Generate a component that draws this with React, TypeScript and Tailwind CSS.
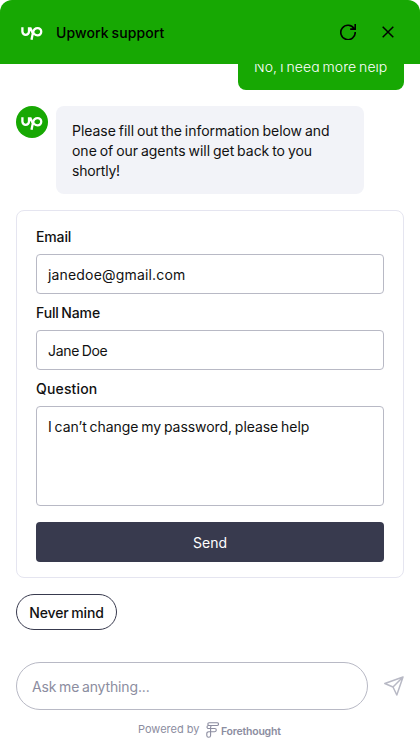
function UpLogo() {
  return (
    <svg className="h-4 w-6 shrink-0" viewBox="0 0 24 16" fill="none" stroke="white" strokeWidth="2.3">
      <path d="M2.4 3.2V7.6a3.3 3.3 0 0 0 6.6 0V4.3h1.5c.8 2.6 2.3 4.7 4.1 5.9" />
      <path d="M11.5 15.8l1.6-7.7c.6-2.6 2.1-4 4.5-4a3.65 3.65 0 1 1 0 7.3c-1.4 0-2.4-.5-3.4-1.4" />
    </svg>
  );
}

function Field({ label, value, tall = false, labelClass, valueClass }: { label: string; value: string; tall?: boolean; labelClass: string; valueClass: string }) {
  return (
    <div className="flex flex-col">
      <label className="h-9 pt-[9px] leading-5 font-medium"><span className={labelClass}>{label}</span></label>
      <div className={`${tall ? "h-[100px]" : "h-10"} rounded border border-[#b8b9c5] px-[11px] pt-[10px] leading-5`}>
        <span className={valueClass}>{value}</span>
      </div>
    </div>
  );
}

export default function App() {
  return (
    <main className="flex h-[750px] w-[420px] flex-col overflow-hidden bg-white font-['Inter',sans-serif] text-sm text-[#111]">
      <header className="flex h-16 shrink-0 items-center rounded-t-[12px] bg-[#17a803] pr-6 pl-5 text-black">
        <UpLogo />
        <h1 className="ml-3 pt-0.5 leading-5 font-medium tracking-[0.11px] [word-spacing:-1px]">Upwork support</h1>
        <div className="ml-auto flex items-center gap-6">
          <button aria-label="Restart">
            <svg className="block h-4 w-4" viewBox="0 0 16 16" fill="none" stroke="currentColor" strokeWidth="1.6">
              <path d="M14.2 4.8A7.2 7.2 0 1 0 15.2 8M15.2 0v5.1h-5" />
            </svg>
          </button>
          <button aria-label="Close">
            <svg className="block h-4 w-4" viewBox="0 0 16 16" fill="none" stroke="currentColor" strokeWidth="1.5">
              <path d="M2.7 2.7l10.6 10.6M13.3 2.7L2.7 13.3" />
            </svg>
          </button>
        </div>
      </header>

      <section className="flex h-[566px] shrink-0 flex-col px-4">
        <div className="flex h-[26px] w-[166px] shrink-0 items-end self-end overflow-hidden rounded-b-lg bg-[#17a803] px-4 pb-[13px] leading-5 text-white">
          <span className="font-light tracking-[0.03px] whitespace-nowrap [word-spacing:-1px]">No, I need more help</span>
        </div>
        <div className="mt-4 flex gap-2">
          <div className="flex h-8 w-8 shrink-0 items-center justify-center rounded-full bg-[#17a803]"><UpLogo /></div>
          <div className="h-[88px] w-[308px] rounded-lg bg-[#f2f3f8] p-4 pt-[15px] leading-5 whitespace-nowrap [word-spacing:-1px]">
            <span className="tracking-[-0.03px]">Please fill out the information below and</span><br />
            <span className="tracking-[-0.02px]">one of our agents will get back to you</span><br />
            <span className="tracking-[-0.2px]">shortly!</span>
          </div>
        </div>
        <form className="mt-4 flex h-[368px] flex-col rounded-lg border border-[#e5e5f0] px-[19px] pt-[7px]">
          <Field label="Email" value="janedoe@gmail.com" labelClass="tracking-[-0.01em]" valueClass="tracking-[0.17px]" />
          <Field label="Full Name" value="Jane Doe" labelClass="tracking-[-0.13px] [word-spacing:-1px]" valueClass="tracking-[-0.3px] [word-spacing:-1px]" />
          <Field label="Question" value="I can’t change my password, please help" tall labelClass="tracking-[0.16px]" valueClass="tracking-[-0.06px] [word-spacing:-1px]" />
          <button type="button" className="mt-4 h-10 rounded bg-[#383a4e] pt-0.5 text-white">Send</button>
        </form>
        <button className="mt-4 h-9 w-[101px] self-start rounded-full border border-[#383a4e] pt-0.5 font-medium whitespace-nowrap"><span className="tracking-[-0.12px] [word-spacing:-1px]">Never mind</span></button>
      </section>

      <footer className="flex flex-col px-4 pt-8 text-[#8c8da0]">
        <div className="flex items-center gap-4">
          <div className="flex h-12 w-[352px] items-center rounded-full border border-[#b8b9c5] px-[15px] pt-0.5"><span className="tracking-[-0.15px] [word-spacing:-1px]">Ask me anything...</span></div>
          <svg className="h-5 w-5 shrink-0 text-[#b8b9c5]" viewBox="0 0 20 20" fill="none" stroke="currentColor" strokeWidth="1.5" strokeLinejoin="round" strokeLinecap="round">
            <path d="M19 1L.8 7.5l8.2 3.5 3.8 8L19 1ZM9 11L19 1" />
          </svg>
        </div>
        <div className="mt-2 flex h-6 items-center pl-[122px] text-[11px]">
          <span className="w-[62px] whitespace-nowrap">Powered by</span>
          <svg className="ml-1.5 h-4 w-[13px]" viewBox="0 0 13 16" fill="none" stroke="currentColor" strokeWidth="1.1">
            <path d="M3.2.7h7.9a1.4 1.4 0 0 1 0 2.8H6.2A1.6 1.6 0 0 0 4.6 5v8.4a1.9 1.9 0 0 1-3.8 0v-1.8a1.9 1.9 0 0 1 1.9-1.9h6a1.6 1.6 0 0 0 0-3.2H2.5a1.5 1.5 0 0 1 0-3h3.7M3.2.7a1.4 1.4 0 0 0 0 2.8" />
          </svg>
          <span className="ml-0.5 pt-0.5 text-[10.5px] font-semibold tracking-[-0.22px]">Forethought</span>
        </div>
      </footer>
    </main>
  );
}
